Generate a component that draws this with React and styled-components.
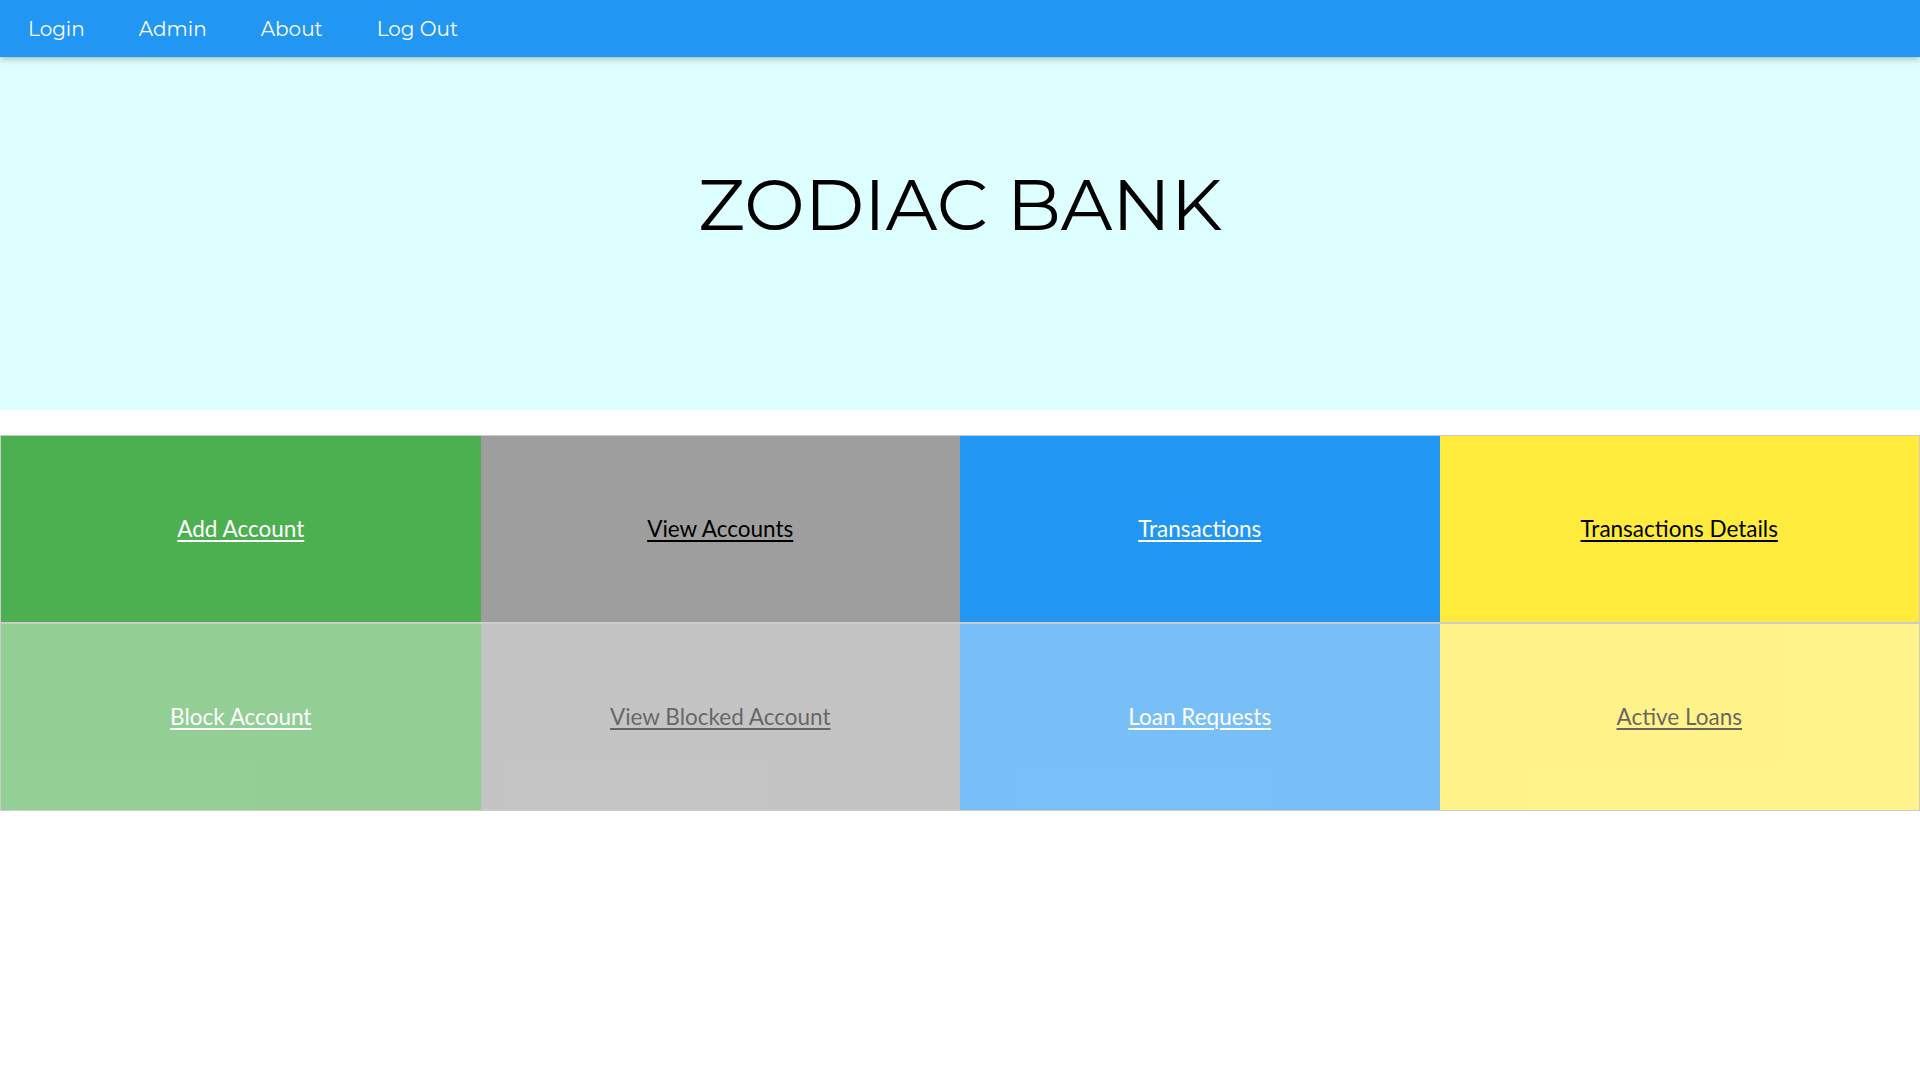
import React from 'react';
import styled, { createGlobalStyle } from 'styled-components';

const GlobalStyle = createGlobalStyle`
  html, body {
    margin: 0;
    padding: 0;
    background: #fff;
  }
  * {
    box-sizing: border-box;
  }
`;

const NavBar = styled.nav`
  display: flex;
  align-items: center;
  height: 57px;
  background: #2196f3;
  box-shadow: 0 2px 5px 0 rgba(0, 0, 0, 0.16), 0 2px 10px 0 rgba(0, 0, 0, 0.12);
  position: relative;
  z-index: 1;
`;

const NavItem = styled.a`
  display: flex;
  align-items: center;
  height: 100%;
  padding: 1px 26px 0 28px;
  color: #fff;
  text-decoration: none;
  font-family: "Montserrat", "Inter", "DejaVu Sans", sans-serif;
  font-size: 20px;
  cursor: pointer;
`;

const Hero = styled.header`
  height: 353px;
  background: #ddffff;
  padding-top: 111px;
  text-align: center;
`;

const Title = styled.h1`
  margin: 0;
  font-family: "Montserrat", "Inter", "DejaVu Sans", sans-serif;
  font-weight: 400;
  font-size: 72px;
  line-height: 1;
  color: #000;
`;

const Grid = styled.section`
  margin-top: 25px;
  border: 1px solid #ccc;
`;

const Row = styled.div`
  display: grid;
  grid-template-columns: repeat(4, 1fr);
  height: 188px;
  border-bottom: 2px solid #ccc;
  opacity: ${(p) => (p.$faded ? 0.6 : 1)};

  &:last-child {
    height: 186px;
    border-bottom: none;
  }
`;

const Cell = styled.div`
  display: flex;
  align-items: center;
  justify-content: center;
  padding-bottom: 2px;
  background: ${(p) => p.$bg};
`;

const CellLink = styled.a`
  font-family: "Lato", "Liberation Sans", sans-serif;
  font-size: 22.5px;
  color: ${(p) => p.$color};
  text-decoration: underline;
  text-decoration-thickness: 2px;
  text-underline-offset: 3px;
  cursor: pointer;
`;

const rows = [
  [
    { label: 'Add Account', bg: '#4caf50', color: '#fff' },
    { label: 'View Accounts', bg: '#9e9e9e', color: '#000' },
    { label: 'Transactions', bg: '#2196f3', color: '#fff' },
    { label: 'Transactions Details', bg: '#ffeb3b', color: '#000' },
  ],
  [
    { label: 'Block Account', bg: '#4caf50', color: '#fff' },
    { label: 'View Blocked Account', bg: '#9e9e9e', color: '#000' },
    { label: 'Loan Requests', bg: '#2196f3', color: '#fff' },
    { label: 'Active Loans', bg: '#ffeb3b', color: '#000' },
  ],
];

export default function App() {
  return (
    <>
      <GlobalStyle />
      <NavBar>
        <NavItem>Login</NavItem>
        <NavItem>Admin</NavItem>
        <NavItem>About</NavItem>
        <NavItem>Log Out</NavItem>
      </NavBar>
      <Hero>
        <Title>ZODIAC BANK</Title>
      </Hero>
      <Grid>
        {rows.map((row, i) => (
          <Row key={i} $faded={i === 1}>
            {row.map((c) => (
              <Cell key={c.label} $bg={c.bg}>
                <CellLink $color={c.color}>{c.label}</CellLink>
              </Cell>
            ))}
          </Row>
        ))}
      </Grid>
    </>
  );
}
